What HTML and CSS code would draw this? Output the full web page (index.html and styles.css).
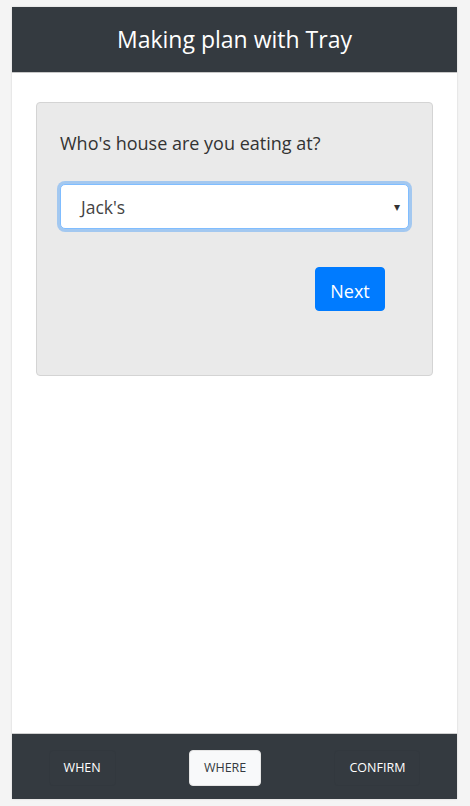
FILE: index.html
```html
<!DOCTYPE html>
<html>
<head>
<meta charset="utf-8">
<link rel="stylesheet" href="styles.css">
</head>
<body>
<div class="phone">
  <header class="topbar">Making plan with Tray</header>
  <main class="content">
    <section class="card">
      <p class="question">Who's house are you eating at?</p>
      <div class="select">
        <span class="select-value">Jack's</span>
        <span class="select-arrow">&#9662;</span>
      </div>
      <div class="actions">
        <button class="btn-next">Next</button>
      </div>
    </section>
  </main>
  <nav class="tabs">
    <span class="tab">WHEN</span>
    <span class="tab active">WHERE</span>
    <span class="tab">CONFIRM</span>
  </nav>
</div>
</body>
</html>
```
FILE: styles.css
```css
* { box-sizing: border-box; }
html, body { margin: 0; padding: 0; }
body {
  background: #f4f4f4;
  font-family: "Open Sans", "Noto Sans", sans-serif;
  padding: 7px 13px 7px 12px;
}
.phone {
  width: 445px;
  height: 792px;
  display: flex;
  flex-direction: column;
  background: #fff;
  box-shadow: 0 0 2px rgba(0,0,0,0.15);
}
.topbar {
  height: 66px;
  background: #343a40;
  color: #fff;
  font-size: 23px;
  display: flex;
  align-items: center;
  justify-content: center;
  border-bottom: 1px solid #c8c8c8;
  padding-bottom: 2px;
}
.content {
  flex: 1;
  padding: 29px 24px 0 24px;
}
.card {
  background: #eaeaea;
  border: 1px solid #d4d4d4;
  border-radius: 4px;
  height: 274px;
  padding: 24px 23px 0 23px;
}
.question {
  margin: 0;
  font-size: 18px;
  color: #333;
  line-height: 32px;
}
.select {
  margin-top: 25px;
  height: 45px;
  background: #fff;
  border: 1px solid #80bdff;
  border-radius: 5px;
  box-shadow: 0 0 0 3px rgba(0,123,255,0.3);
  display: flex;
  align-items: center;
  justify-content: space-between;
  padding: 0 8px 0 20px;
}
.select-value {
  font-size: 17.5px;
  color: #444;
}
.select-arrow {
  font-size: 12px;
  color: #333;
}
.actions {
  display: flex;
  justify-content: flex-end;
  padding-right: 24px;
  margin-top: 38px;
}
.btn-next {
  width: 70px;
  height: 44px;
  background: #007bff;
  color: #fff;
  border: 1px solid #007bff;
  border-radius: 4px;
  font-family: inherit;
  font-size: 18px;
  padding: 3px 0 0 0;
}
.tabs {
  height: 66px;
  background: #343a40;
  border-top: 1px solid #d0d0d0;
  display: flex;
  align-items: center;
  justify-content: space-around;
  padding-top: 2px;
}
.tab {
  color: #fff;
  font-size: 12.5px;
  padding: 9px 14px;
  border-radius: 4px;
  line-height: 16px;
  border: 1px solid #32383e;
}
.tab.active {
  background: #f8f9fa;
  color: #343a40;
  border-color: #e5e5e5;
}
```
